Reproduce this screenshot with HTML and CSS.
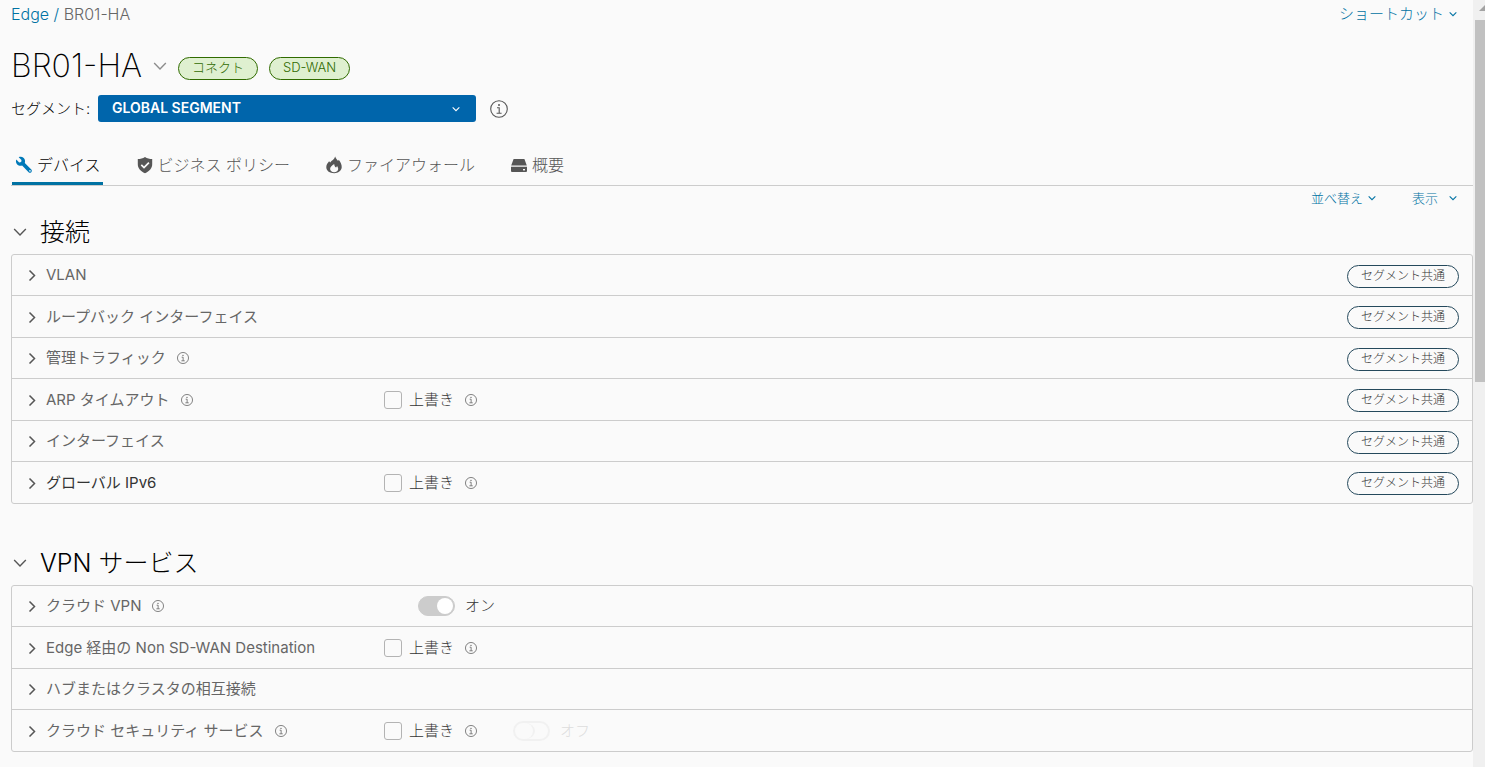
FILE: index.html
```
<!DOCTYPE html>
<html lang="ja">

<head>
    <meta charset="UTF-8">
    <meta name="viewport" content="width=device-width, initial-scale=1.0">
    <title>BR01-HA</title>

    <link rel="stylesheet" href="styles.css">

</head>

<body>

    <svg class="sprite" aria-hidden="true">
        <symbol id="down" viewBox="0 0 12 12">
            <path d="M1 3.5 L6 8.5 L11 3.5" fill="none" stroke="currentColor" />
        </symbol>
        <symbol id="right" viewBox="0 0 12 12">
            <path d="M3.5 1.5 L8.5 6.5 L3.5 11.5" fill="none" stroke="currentColor" />
        </symbol>
        <symbol id="info" viewBox="0 0 18 18">
            <circle cx="9" cy="9" r="8.3" fill="none" stroke="currentColor" stroke-width="1.1" />
            <circle cx="9" cy="5" r="1" fill="currentColor" />
            <path d="M7 7.8 H9.2 V13 M6.6 13.2 H11.6" fill="none" stroke="currentColor" stroke-width="1.1" />
        </symbol>
    </svg>

    <main>

        <header class="top">
            <nav class="breadcrumb">
                <a href="#">Edge</a> <span class="slash">/</span> <span>BR01-HA</span>
            </nav>
            <button class="link shortcut">ショートカット<svg class="chev-s"><use href="#down" /></svg></button>
        </header>

        <div class="title">
            <h1>BR01-HA</h1>
            <button class="link title-menu" aria-label="Edge"><svg class="chev-l"><use href="#down" /></svg></button>
            <span class="pill">コネクト</span>
            <span class="pill">SD-WAN</span>
        </div>

        <div class="segment">
            <label for="segment">セグメント:</label>
            <span class="select">
                <select id="segment">
                    <option>GLOBAL SEGMENT</option>
                </select>
                <svg class="chev-s"><use href="#down" /></svg>
            </span>
            <svg class="info-l"><use href="#info" /></svg>
        </div>

        <nav class="tabs">
            <a href="#" class="tab active">
                <svg class="tab-icon" viewBox="0 0 18 18">
                    <path d="M16.3 13.5 L9.8 7.1 C10.4 5.3 10 3.4 8.7 2.1 C7.4 .8 5.4 .5 3.7 1.2 L6.5 4 L6.2 6 L4.2 6.4 L1.3 3.6 C.6 5.3 .9 7.2 2.2 8.5 C3.5 9.8 5.4 10.2 7.1 9.6 L13.6 16.2 C14.3 17 15.5 17 16.3 16.2 C17 15.4 17 14.2 16.3 13.5 Z M14.9 15.7 A.8 .8 0 1 1 15 14.1 A.8 .8 0 0 1 14.9 15.7 Z" fill="currentColor" />
                </svg>
                デバイス
            </a>
            <a href="#" class="tab">
                <svg class="tab-icon" viewBox="0 0 18 18">
                    <path d="M9 1 C11.2 2.5 13.6 3.1 16.2 3.1 V8.2 C16.2 12 13.5 15.2 9 17.2 C4.5 15.2 1.8 12 1.8 8.2 V3.1 C4.4 3.1 6.8 2.5 9 1 Z" fill="currentColor" />
                    <path d="M5.3 8.9 L8 11.5 L12.9 6.6" fill="none" stroke="#fafafa" stroke-width="1.7" />
                </svg>
                ビジネス ポリシー
            </a>
            <a href="#" class="tab">
                <svg class="tab-icon" viewBox="0 0 18 18">
                    <path d="M10.2 .6 C10.9 2.6 12 4 13.1 5.1 L13.7 3.8 C15.6 6.2 17 8.8 16.7 11.6 C16.3 15 13.2 17.2 9.2 17.2 C4.8 17.2 1.5 15 1.3 11.5 C1.1 8.8 2.6 7.1 4.1 5.2 L5.2 6.6 C6.6 4.5 9.3 3.7 10.2 .6 Z" fill="currentColor" />
                    <path d="M9.2 8 C7.3 9.6 5 10.5 5.1 13 C5.2 15 6.9 16.2 9.1 16.2 C11.5 16.2 13.2 15 13.2 13 C13.2 11.9 12.6 11.1 12.1 10.1 L11.1 11.6 C9.8 10.8 9.3 9.6 9.2 8 Z" fill="#fafafa" />
                </svg>
                ファイアウォール
            </a>
            <a href="#" class="tab">
                <svg class="tab-icon" viewBox="0 0 18 18">
                    <path d="M3.6 3 H14.4 L16.8 9.6 H1.2 Z M1 10.8 H17 V15 Q17 16 16 16 H2 Q1 16 1 15 Z" fill="currentColor" />
                    <rect x="13" y="13" width="2" height="1.4" fill="#fafafa" />
                </svg>
                概要
            </a>
        </nav>

        <div class="tools">
            <button class="link">並べ替え<svg class="chev-s"><use href="#down" /></svg></button>
            <button class="link show">表示<svg class="chev-s"><use href="#down" /></svg></button>
        </div>

        <section>

            <h2><svg class="chev-l"><use href="#down" /></svg>接続</h2>

            <ul class="list">
                <li>
                    <div class="name"><svg class="chev-r"><use href="#right" /></svg>VLAN</div>
                    <span class="common">セグメント共通</span>
                </li>
                <li>
                    <div class="name"><svg class="chev-r"><use href="#right" /></svg>ループバック インターフェイス</div>
                    <span class="common">セグメント共通</span>
                </li>
                <li>
                    <div class="name"><svg class="chev-r"><use href="#right" /></svg>管理トラフィック<svg class="info-s"><use href="#info" /></svg></div>
                    <span class="common">セグメント共通</span>
                </li>
                <li>
                    <div class="name"><svg class="chev-r"><use href="#right" /></svg>ARP タイムアウト<svg class="info-s"><use href="#info" /></svg></div>
                    <div class="option">
                        <label><input type="checkbox" name="arp">上書き</label>
                        <svg class="info-s"><use href="#info" /></svg>
                    </div>
                    <span class="common">セグメント共通</span>
                </li>
                <li>
                    <div class="name"><svg class="chev-r"><use href="#right" /></svg>インターフェイス</div>
                    <span class="common">セグメント共通</span>
                </li>
                <li>
                    <div class="name dark"><svg class="chev-r"><use href="#right" /></svg>グローバル IPv6</div>
                    <div class="option">
                        <label><input type="checkbox" name="ipv6">上書き</label>
                        <svg class="info-s"><use href="#info" /></svg>
                    </div>
                    <span class="common">セグメント共通</span>
                </li>
            </ul>

        </section>

        <section>

            <h2><svg class="chev-l"><use href="#down" /></svg>VPN サービス</h2>

            <ul class="list">
                <li>
                    <div class="name"><svg class="chev-r"><use href="#right" /></svg>クラウド VPN<svg class="info-s"><use href="#info" /></svg></div>
                    <div class="option inset">
                        <label><input type="checkbox" class="switch" name="vpn" checked>オン</label>
                    </div>
                </li>
                <li>
                    <div class="name"><svg class="chev-r"><use href="#right" /></svg>Edge 経由の Non SD-WAN Destination</div>
                    <div class="option">
                        <label><input type="checkbox" name="nsd">上書き</label>
                        <svg class="info-s"><use href="#info" /></svg>
                    </div>
                </li>
                <li>
                    <div class="name"><svg class="chev-r"><use href="#right" /></svg>ハブまたはクラスタの相互接続</div>
                </li>
                <li>
                    <div class="name"><svg class="chev-r"><use href="#right" /></svg>クラウド セキュリティ サービス<svg class="info-s"><use href="#info" /></svg></div>
                    <div class="option">
                        <label><input type="checkbox" name="css">上書き</label>
                        <svg class="info-s"><use href="#info" /></svg>
                        <label class="off"><input type="checkbox" class="switch" name="css-on" disabled>オフ</label>
                    </div>
                </li>
            </ul>

        </section>

    </main>

    <div class="scroll" aria-hidden="true">
        <svg class="arrow" viewBox="0 0 10 20"><path d="M4 11 L10 5 V11 Z" fill="#a3a3a3" /></svg>
        <div class="thumb"></div>
    </div>

</body>

</html>
```
FILE: styles.css
```
* {
    box-sizing: border-box;
}

body {
    display: flex;
    margin: 0;
    height: 100vh;
    overflow: hidden;
    background-color: #fafafa;
    color: #000;
    font-family: Inter, "Noto Sans CJK JP", sans-serif;
    font-size: 15px;
    font-weight: 300;
    line-height: 24px;
}

main {
    flex: 1;
    min-width: 0;
    padding-left: 11px;
}

h1,
h2,
ul {
    margin: 0;
    padding: 0;
    font-weight: 300;
}

a,
.link {
    color: #0072a3;
    text-decoration: none;
}

.link {
    display: inline-flex;
    align-items: center;
    padding: 0;
    border: 0;
    background: none;
    font: inherit;
}

svg {
    flex: none;
}

.sprite {
    display: none;
}

.chev-s {
    width: 8px;
    height: 8px;
    stroke-width: 1.6;
}

.chev-l {
    width: 14px;
    height: 14px;
    color: #565656;
    stroke-width: 1.2;
}

.chev-r {
    width: 12px;
    height: 12px;
    margin-right: 8px;
    color: #565656;
    stroke-width: 1.5;
}

.info-l {
    width: 18px;
    height: 18px;
    color: #565656;
}

.info-s {
    width: 12px;
    height: 12px;
    margin-left: 11px;
    color: #565656;
}

/* header */

.top {
    display: flex;
    justify-content: space-between;
    padding: 2px 16px 0 0;
}

.breadcrumb {
    color: #666;
    font-size: 16px;
}

.slash {
    color: #0072a3;
}

.shortcut .chev-s {
    margin-left: 5px;
}

.title {
    display: flex;
    align-items: center;
    padding-top: 20px;
}

h1 {
    font-size: 32px;
    font-weight: 200;
    line-height: 40px;
}

.title-menu {
    margin: 0 11px;
}

.title-menu .chev-l {
    color: #8c8c8c;
}

.pill {
    height: 23px;
    margin: 4px 11px 0 0;
    padding: 0 13px;
    border: 1px solid #306b00;
    border-radius: 12px;
    background-color: #dff0d0;
    color: #306b00;
    font-size: 13px;
    line-height: 19px;
}

.segment {
    display: flex;
    align-items: center;
    padding-top: 9px;
}

.segment label {
    width: 87px;
    white-space: nowrap;
}

.select {
    display: grid;
    align-items: center;
    width: 378px;
    margin-right: 14px;
    color: #fff;
}

.select select,
.select svg {
    grid-area: 1 / 1;
}

.select svg {
    justify-self: end;
    margin-right: 16px;
    pointer-events: none;
}

select {
    height: 27px;
    padding: 0 14px 2px;
    border: 0;
    border-radius: 3px;
    appearance: none;
    background-color: #0065ab;
    color: #fff;
    font-family: inherit;
    font-size: 14px;
    font-weight: 600;
}

/* tabs */

.tabs {
    display: flex;
    gap: 30px;
    margin-top: 25px;
    border-bottom: 1px solid #ccc;
    font-size: 16px;
}

.tab {
    display: flex;
    align-items: center;
    gap: 4px;
    height: 38px;
    padding: 0 2px 0 3px;
    border-bottom: 3px solid transparent;
    color: #565656;
}

.tab.active {
    margin-left: 1px;
    border-color: #0072a3;
    color: #000;
}

.tab-icon {
    width: 18px;
    height: 18px;
}

.active .tab-icon {
    color: #0079b8;
}

.tools {
    display: flex;
    justify-content: flex-end;
    gap: 36px;
    padding-right: 16px;
    font-size: 13px;
}

.tools .chev-s {
    margin-left: 5px;
}

.tools .show .chev-s {
    margin-left: 11px;
}

/* sections */

h2 {
    display: flex;
    align-items: center;
    gap: 13px;
    padding-left: 2px;
    font-size: 25px;
    line-height: 44px;
}

section + section {
    margin-top: 37px;
}

.list {
    border: 1px solid #ccc;
    border-radius: 3px;
    list-style: none;
}

.list li {
    display: grid;
    grid-template-columns: 372px 1fr auto;
    align-items: center;
    height: 41px;
    padding-right: 13px;
    border-bottom: 1px solid #ccc;
}

.list li:nth-child(even) {
    height: 42px;
}

.list li:last-child {
    height: 41px;
    border-bottom: 0;
}

.name {
    display: flex;
    align-items: center;
    padding-left: 14px;
    color: #666;
    font-weight: 400;
    white-space: nowrap;
}

.name.dark {
    color: #333;
}

.option {
    display: flex;
    align-items: center;
    color: #333;
}

.option.inset {
    padding-left: 34px;
}

.option label {
    display: flex;
    align-items: center;
}

.option input {
    width: 18px;
    height: 18px;
    margin: 0 7px 0 0;
    border: 1px solid #b3b3b3;
    border-radius: 3px;
    appearance: none;
}

.option .switch {
    display: flex;
    width: 37px;
    height: 20px;
    margin-right: 10px;
    padding: 1px;
    border: 1px solid #ccc;
    border-radius: 10px;
}

.switch::before {
    content: "";
    width: 16px;
    height: 16px;
    border-radius: 50%;
    background-color: #fff;
}

.switch:checked {
    justify-content: flex-end;
    background-color: #ccc;
}

.option .off {
    margin-left: 36px;
    color: #ddd;
}

.off .switch {
    padding: 0;
    border: 2px solid #f1f1f1;
}

.off .switch::before {
    width: 18px;
    border-right: 2px solid #f1f1f1;
    background: none;
}

.common {
    grid-column: 3;
    height: 23px;
    margin-top: 2px;
    padding: 0 13px;
    border: 1px solid #25495c;
    border-radius: 12px;
    color: #333;
    font-size: 12px;
    line-height: 20px;
}

/* scrollbar */

.scroll {
    width: 12px;
    padding-left: 2px;
    background-color: #f0f0f0;
}

.arrow {
    display: block;
    width: 10px;
    height: 20px;
}

.thumb {
    height: 362px;
    background-color: #c1c1c1;
}
```
